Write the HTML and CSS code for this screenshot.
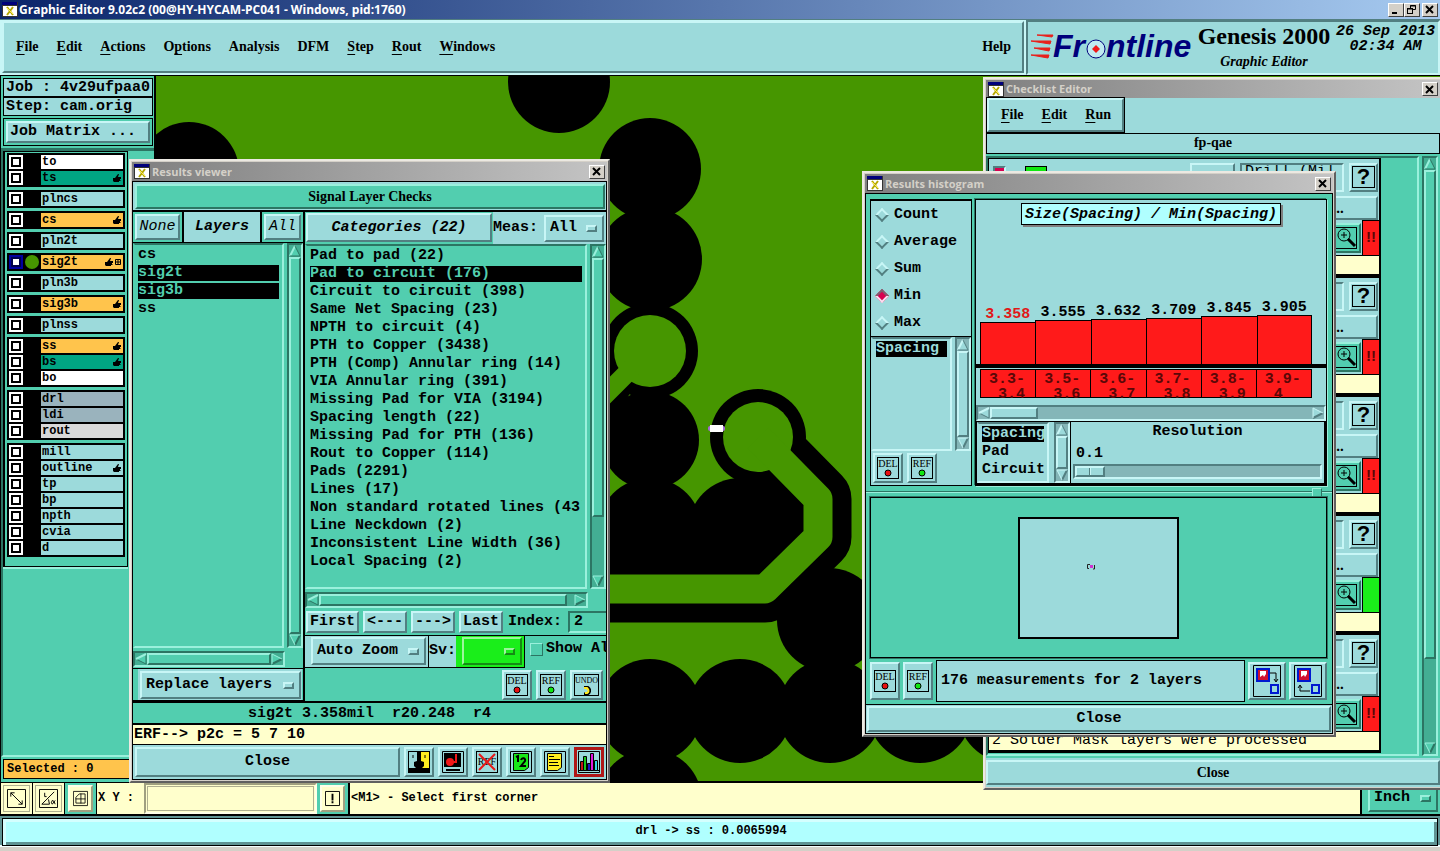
FILE: index.html
```html
<!DOCTYPE html>
<html lang="en">
<head>
  <meta charset="UTF-8">
  <title>Graphic Editor 9.02c2</title>
  <link rel="stylesheet" href="styles.css">
</head>
<body>
  <!-- shared icons -->
  <svg class="sprite" aria-hidden="true">
    <symbol id="app" viewBox="0 0 16 15">
      <rect width="16" height="15" fill="#333"/><rect width="15" height="3" fill="#00007b"/><rect x="1" y="4" width="14" height="10" fill="#fff"/>
      <path d="M5 5l6 8M11 5l-6 8" stroke="#b5a800" stroke-width="2"/><path d="M5 6l6 6" stroke="#ffee55"/>
    </symbol>
    <symbol id="close" viewBox="0 0 10 9"><path d="M1 1l7 7M8 1l-7 7" stroke="#000" stroke-width="2"/></symbol>
    <symbol id="hand" viewBox="0 0 8 8"><path d="M0 4h2l3-4h1L5 3h3v2H7v1h1L7 7H6v1H1L0 7z"/></symbol>
    <symbol id="up" viewBox="0 0 12 12"><path d="M6 1L1 11h10z" fill="var(--bg)"/><path d="M6 1L1 11" stroke="var(--light)" stroke-width="2"/><path d="M6 1l5 10H1" fill="none" stroke="var(--dark)" stroke-width="1"/></symbol>
    <symbol id="down" viewBox="0 0 12 12"><path d="M6 11L1 1h10z" fill="var(--bg)"/><path d="M11 1L6 11" stroke="var(--dark)" stroke-width="2"/><path d="M6 11L1 1h10" fill="none" stroke="var(--light)"/></symbol>
    <symbol id="left" viewBox="0 0 12 12"><path d="M1 6l10-5v10z" fill="var(--bg)"/><path d="M1 6l10 5V1" fill="none" stroke="var(--dark)"/><path d="M1 6l10-5" stroke="var(--light)" stroke-width="2"/></symbol>
    <symbol id="right" viewBox="0 0 12 12"><path d="M11 6L1 1v10z" fill="var(--bg)"/><path d="M11 6L1 11" stroke="var(--dark)" stroke-width="2"/><path d="M11 6L1 1v10" fill="none" stroke="var(--light)"/></symbol>
    <symbol id="red-dot" viewBox="0 0 8 8"><circle cx="4" cy="4" r="3" fill="#e81010" stroke="#000"/></symbol>
    <symbol id="green-dot" viewBox="0 0 8 8"><circle cx="4" cy="4" r="3" fill="#10e810" stroke="#000"/></symbol>
    <symbol id="zoom" viewBox="0 0 22 22">
      <rect x=".5" y=".5" width="21" height="21" fill="none" stroke="#000"/><circle cx="9" cy="8" r="6" fill="none" stroke="#000"/>
      <path d="M6 8h6M9 5v6" stroke="#000"/><path d="M13 12l7 7" stroke="#000" stroke-width="3"/>
    </symbol>
  </svg>

  <div class="app-title">
    <svg class="app-icon"><use href="#app"/></svg>
    <h1>Graphic Editor 9.02c2 (00@HY-HYCAM-PC041 - Windows, pid:1760)</h1>
    <button class="win-btn" aria-label="Minimize"><svg viewBox="0 0 10 9"><path d="M1 8h5" stroke="#000" stroke-width="2"/></svg></button>
    <button class="win-btn" aria-label="Restore"><svg viewBox="0 0 10 9"><path d="M3.500 3V.5h5v4H6M3 1h6M1 4h5" fill="none" stroke="#000"/><rect x=".5" y="3.500" width="5" height="5" fill="none" stroke="#000"/></svg></button>
    <button class="win-btn last" aria-label="Close"><svg><use href="#close"/></svg></button>
  </div>

  <header class="top">
    <nav class="main-menu">
      <button><u>F</u>ile</button>
      <button><u>E</u>dit</button>
      <button><u>A</u>ctions</button>
      <button>O<u>p</u>tions</button>
      <button>Analysis</button>
      <button>DFM</button>
      <button><u>S</u>tep</button>
      <button><u>R</u>out</button>
      <button><u>W</u>indows</button>
      <button class="help">Help</button>
    </nav>
    <div class="brand">
      <svg class="logo" viewBox="0 0 162 44" role="img" aria-label="Frontline">
        <path d="M6 10h16l-1 2zM0 16h20l-1 3zM3 23h16l-1 3zM0 30h18l-1 3z" fill="#e8201c" stroke="#e8201c"/>
        <g class="logo-text"><text x="22" y="32">Fr</text><text x="75" y="32">ntline</text></g>
        <circle cx="65" cy="24" r="9" fill="#bfeaf0" stroke="#00007b" stroke-width="1"/>
        <path d="M65 20l4 4-4 4-4-4z" fill="#f01818"/>
      </svg>
      <div class="product">
        <strong>Genesis 2000</strong>
        <em>Graphic Editor</em>
      </div>
      <div class="clock">26 Sep 2013<br>02:34 AM</div>
    </div>
  </header>

  <main class="work">
    <aside class="side teal">
      <div class="job">Job : 4v29ufpaa0</div>
      <div class="job">Step: cam.orig</div>
      <div class="matrix"><button class="cyan raised">Job Matrix ...</button></div>
      <div class="layer-area">
        <div class="layer-list">
          <div class="group">
            <label class="layer white"><input type="checkbox"><i></i><span>to</span></label>
            <label class="layer dark"><input type="checkbox"><i></i><span>ts<svg><use href="#hand"/></svg></span></label>
          </div>
          <div class="group"><label class="layer"><input type="checkbox"><i></i><span>plncs</span></label></div>
          <div class="group"><label class="layer orange"><input type="checkbox"><i></i><span>cs<svg><use href="#hand"/></svg></span></label></div>
          <div class="group"><label class="layer"><input type="checkbox"><i></i><span>pln2t</span></label></div>
          <div class="group"><label class="layer orange"><input type="checkbox" checked><i class="dot"></i><span>sig2t<svg><use href="#hand"/></svg><svg class="snap" viewBox="0 0 6 6"><path d="M.5.500h5v5h-5zM3 0v6M0 3h6" fill="none" stroke="#000"/></svg></span></label></div>
          <div class="group"><label class="layer"><input type="checkbox"><i></i><span>pln3b</span></label></div>
          <div class="group"><label class="layer orange"><input type="checkbox"><i></i><span>sig3b<svg><use href="#hand"/></svg></span></label></div>
          <div class="group"><label class="layer"><input type="checkbox"><i></i><span>plnss</span></label></div>
          <div class="group">
            <label class="layer orange"><input type="checkbox"><i></i><span>ss<svg><use href="#hand"/></svg></span></label>
            <label class="layer dark"><input type="checkbox"><i></i><span>bs<svg><use href="#hand"/></svg></span></label>
            <label class="layer white"><input type="checkbox"><i></i><span>bo</span></label>
          </div>
          <div class="group">
            <label class="layer slate"><input type="checkbox"><i></i><span>drl</span></label>
            <label class="layer slate"><input type="checkbox"><i></i><span>ldi</span></label>
            <label class="layer grey"><input type="checkbox"><i></i><span>rout</span></label>
          </div>
          <div class="group">
            <label class="layer"><input type="checkbox"><i></i><span>mill</span></label>
            <label class="layer"><input type="checkbox"><i></i><span>outline<svg><use href="#hand"/></svg></span></label>
            <label class="layer"><input type="checkbox"><i></i><span>tp</span></label>
            <label class="layer"><input type="checkbox"><i></i><span>bp</span></label>
            <label class="layer"><input type="checkbox"><i></i><span>npth</span></label>
            <label class="layer"><input type="checkbox"><i></i><span>cvia</span></label>
            <label class="layer"><input type="checkbox"><i></i><span>d</span></label>
          </div>
        </div>
      </div>
      <div class="selected">Selected : 0</div>
    </aside>

    <svg class="board" aria-label="Board view">
      <g transform="translate(-156 -76)">
        <circle cx="559" cy="82" r="51"/><circle cx="189" cy="172" r="50"/>
        <circle cx="650" cy="169" r="51"/><circle cx="650" cy="259" r="52"/>
        <circle cx="650" cy="440" r="49"/><circle cx="650" cy="351" r="48"/>
        <circle cx="650" cy="530" r="52"/><circle cx="740" cy="530" r="52"/>
        <path d="M600 510h205v65H600zM740 478l60 0v60h-60z"/>
        <path d="M608 350v80l24-40z"/>
        <circle cx="650" cy="351" r="36" class="copper"/>
        <path d="M632 368L600 400" class="track thin"/>
        <circle cx="758" cy="437" r="48"/>
        <path d="M758 438l60 61v38l-53 52H600" class="clearance"/>
        <circle cx="758" cy="437" r="35" class="copper"/>
        <path d="M758 438l60 61v38l-53 52H600" class="track"/>
        <circle cx="829" cy="620" r="52"/>
        <circle cx="650" cy="711" r="52"/><circle cx="740" cy="711" r="52"/><circle cx="830" cy="711" r="52"/>
        <circle cx="920" cy="711" r="52"/><circle cx="1010" cy="711" r="52"/><circle cx="650" cy="801" r="52"/>
        <path d="M600 690h400v40H600z"/>
        <rect x="708" y="426" width="17" height="5" rx="2" fill="#a66ad8"/><rect x="710" y="425" width="13" height="7" fill="#fff"/>
      </g>
    </svg>
  </main>

  <footer class="status">
    <button class="tool" aria-label="Measure"><svg viewBox="0 0 20 20"><path d="M.5.500h19v19H.5zM4 4l12 12M4 8V4h4M16 12v4h-4" fill="none" stroke="#000"/></svg></button>
    <button class="tool" aria-label="Angle"><svg viewBox="0 0 20 20"><path d="M.5.500h19v19H.5zM3 16L16 3M3 16h8M6 4v4h2M10 11l1 5M17 12l-3 4q-2-1 0-4 2 0 3 4" fill="none" stroke="#000"/></svg></button>
    <button class="tool on" aria-label="Grid"><svg viewBox="0 0 18 18"><path d="M.5.500h17v17H.5zM3.500 14.500v-7l4-4h7v11zM3 9.500h12M9.500 3v12" fill="none" stroke="#000"/></svg></button>
    <label for="xy">X Y :</label>
    <input id="xy" type="text">
    <button class="tool on" aria-label="Alert"><svg viewBox="0 0 16 16"><path d="M.5.500h15v15H.5z" fill="none" stroke="#000"/><path d="M8 3v7M8 11v2" stroke="#000" stroke-width="2"/></svg></button>
    <output class="prompt">&lt;M1&gt; - Select first corner</output>
    <div class="units teal"><span class="option raised"><select aria-label="Units"><option>Inch</option></select><i class="knob"></i></span></div>
  </footer>
  <div class="message"><p>drl -&gt; ss : 0.0065994</p></div>

  <section class="window checklist">
    <div class="win-title"><svg class="app-icon"><use href="#app"/></svg><h2>Checklist Editor</h2><button class="win-btn" aria-label="Close"><svg><use href="#close"/></svg></button></div>
    <div class="win-body cyan">
      <nav class="sub-menu raised"><button><u>F</u>ile</button><button><u>E</u>dit</button><button><u>R</u>un</button></nav>
      <h3 class="check-name">fp-qae</h3>
      <div class="check-area teal">
        <div class="check-view">
          <ul class="checks">
            <li class="cyan">
              <div class="check-row"><input type="checkbox" aria-label="Use check" checked><b class="state"></b><span class="label">Drill Checks</span><button class="raised run" aria-label="Run"></button><input type="text" value="Drill (Mil" aria-label="Comment"><button class="raised ask"><span>?</span></button></div>
              <div class="check-row"><button class="raised more">...</button></div>
              <div class="check-row tight"><button class="raised teal lens" aria-label="Zoom"><svg><use href="#zoom"/></svg></button><b class="flag">!!</b></div>
              <p></p>
            </li>
            <li class="cyan">
              <div class="check-row"><input type="text" aria-label="Comment"><button class="raised ask"><span>?</span></button></div>
              <div class="check-row"><button class="raised more">...</button></div>
              <div class="check-row tight"><button class="raised teal lens" aria-label="Zoom"><svg><use href="#zoom"/></svg></button><b class="flag">!!</b></div>
              <p></p>
            </li>
            <li class="cyan">
              <div class="check-row"><input type="text" aria-label="Comment"><button class="raised ask"><span>?</span></button></div>
              <div class="check-row"><button class="raised more">...</button></div>
              <div class="check-row tight"><button class="raised teal lens" aria-label="Zoom"><svg><use href="#zoom"/></svg></button><b class="flag">!!</b></div>
              <p></p>
            </li>
            <li class="cyan">
              <div class="check-row"><input type="text" aria-label="Comment"><button class="raised ask"><span>?</span></button></div>
              <div class="check-row"><button class="raised more">...</button></div>
              <div class="check-row tight"><button class="raised teal lens" aria-label="Zoom"><svg><use href="#zoom"/></svg></button><b class="flag ok"></b></div>
              <p></p>
            </li>
            <li class="cyan">
              <div class="check-row"><input type="text" aria-label="Comment"><button class="raised ask"><span>?</span></button></div>
              <div class="check-row"><button class="raised more">...</button></div>
              <div class="check-row tight"><button class="raised teal lens" aria-label="Zoom"><svg><use href="#zoom"/></svg></button><b class="flag">!!</b></div>
              <p>2 Solder Mask layers were processed</p>
            </li>
          </ul>
        </div>
        <div class="vscroll"><svg><use href="#up"/></svg><i style="flex: 0 0 82%"></i><svg><use href="#down"/></svg></div>
      </div>
      <button class="raised wide-close serif">Close</button>
    </div>
  </section>

  <section class="window histogram">
    <div class="win-title"><svg class="app-icon"><use href="#app"/></svg><h2>Results histogram</h2><button class="win-btn" aria-label="Close"><svg><use href="#close"/></svg></button></div>
    <div class="win-body teal">
      <div class="histo-top">
        <div class="measure cyan">
          <fieldset class="modes">
            <label><input type="radio" name="mode">Count</label>
            <label><input type="radio" name="mode">Average</label>
            <label><input type="radio" name="mode">Sum</label>
            <label><input type="radio" name="mode" checked>Min</label>
            <label><input type="radio" name="mode">Max</label>
          </fieldset>
          <div class="pick">
            <ul class="list"><li class="on">Spacing</li></ul>
            <div class="vscroll"><svg><use href="#up"/></svg><i></i><svg><use href="#down"/></svg></div>
          </div>
          <div class="icons">
            <button class="raised icon"><span class="tag">DEL<svg><use href="#red-dot"/></svg></span></button>
            <button class="raised icon"><span class="tag">REF<svg><use href="#green-dot"/></svg></span></button>
          </div>
        </div>
        <div class="chart cyan">
          <h3>Size(Spacing) / Min(Spacing)</h3>
          <div class="bars">
            <div class="bar hot"><span>3.358</span><i style="height: 42px"></i></div>
            <div class="bar"><span>3.555</span><i style="height: 44px"></i></div>
            <div class="bar"><span>3.632</span><i style="height: 45px"></i></div>
            <div class="bar"><span>3.709</span><i style="height: 46px"></i></div>
            <div class="bar"><span>3.845</span><i style="height: 48px"></i></div>
            <div class="bar"><span>3.905</span><i style="height: 49px"></i></div>
          </div>
          <div class="ranges">
            <span>3.3-<br>&nbsp;3.4</span><span>3.5-<br>&nbsp;3.6</span><span>3.6-<br>&nbsp;3.7</span><span>3.7-<br>&nbsp;3.8</span><span>3.8-<br>&nbsp;3.9</span><span>3.9-<br>&nbsp;4</span>
          </div>
          <div class="hscroll"><svg><use href="#left"/></svg><i style="flex: 0 0 14%"></i><svg><use href="#right"/></svg></div>
          <div class="chart-foot">
            <ul class="list"><li class="on">Spacing</li><li>Pad</li><li>Circuit</li></ul>
            <div class="vscroll"><svg><use href="#up"/></svg><i></i><svg><use href="#down"/></svg></div>
            <div class="resolution">
              <label for="res">Resolution</label>
              <output for="res">0.1</output>
              <input id="res" type="range" min="0" max="10" value="0" step="1">
            </div>
          </div>
        </div>
      </div>
      <div class="sash"><i></i></div>
      <div class="map"><div class="cyan"><svg viewBox="0 0 8 6"><path d="M3 .5H.5v4H2M6 5h1.500V1" fill="none" stroke="#222"/><rect x="3" y="1" width="3" height="3" fill="#d030d0"/></svg></div></div>
      <div class="summary">
        <button class="cyan raised icon"><span class="tag">DEL<svg><use href="#red-dot"/></svg></span></button>
        <button class="cyan raised icon"><span class="tag">REF<svg><use href="#green-dot"/></svg></span></button>
        <p class="cyan">176 measurements for 2 layers</p>
        <button class="cyan raised copy" aria-label="Copy to view"><svg viewBox="0 0 28 32"><path d="M.5.500h27v31H.5z" fill="none" stroke="#000"/><rect x="4" y="4" width="12" height="12" fill="#d01030" stroke="#0018d0" stroke-width="2"/><path d="M7 6v6l3-2 1 2 2-3V6z" fill="#fff"/><path d="M17 8h6v8M21 14l2 3 2-3" fill="none" stroke="#000"/><rect x="18" y="20" width="7" height="8" fill="none" stroke="#0018d0" stroke-width="2"/></svg></button>
        <button class="cyan raised copy" aria-label="Copy from view"><svg viewBox="0 0 28 32"><path d="M.5.500h27v31H.5z" fill="none" stroke="#000"/><rect x="4" y="4" width="12" height="12" fill="#d01030" stroke="#0018d0" stroke-width="2"/><path d="M7 6v6l3-2 1 2 2-3V6z" fill="#fff"/><path d="M16 26H6v-5M4 23l2-3 2 3" fill="none" stroke="#000"/><rect x="18" y="20" width="7" height="8" fill="none" stroke="#0018d0" stroke-width="2"/></svg></button>
      </div>
      <div class="close-bar cyan"><button class="raised wide-close">Close</button></div>
    </div>
  </section>

  <section class="window viewer">
    <div class="win-title"><svg class="app-icon"><use href="#app"/></svg><h2>Results viewer</h2><button class="win-btn" aria-label="Close"><svg><use href="#close"/></svg></button></div>
    <div class="win-body teal">
      <div class="check-title cyan"><button class="teal raised serif">Signal Layer Checks</button></div>
      <div class="columns">
        <div class="layers-col">
          <div class="layers-head">
            <span><button class="cyan raised">None</button></span>
            <h3 class="cyan">Layers</h3>
            <span><button class="cyan raised">All</button></span>
          </div>
          <div class="pick">
            <ul class="list"><li>cs</li><li class="on">sig2t</li><li class="on">sig3b</li><li>ss</li></ul>
            <div class="vscroll"><svg><use href="#up"/></svg><i></i><svg><use href="#down"/></svg></div>
          </div>
          <div class="hscroll"><svg><use href="#left"/></svg><i></i><svg><use href="#right"/></svg></div>
          <div class="replace"><div class="cyan"><span class="option raised"><select aria-label="Layer display"><option>Replace layers</option></select><i class="knob"></i></span></div></div>
        </div>
        <div class="cats-col">
          <div class="cats-head">
            <button class="cyan raised">Categories (22)</button>
            <div class="meas cyan"><label for="meas">Meas:</label><span class="option raised"><select id="meas"><option>All</option></select><i class="knob"></i></span></div>
          </div>
          <div class="pick">
            <ul class="list">
              <li>Pad to pad (22)</li>
              <li class="on">Pad to circuit (176)</li>
              <li>Circuit to circuit (398)</li>
              <li>Same Net Spacing (23)</li>
              <li>NPTH to circuit (4)</li>
              <li>PTH to Copper (3438)</li>
              <li>PTH (Comp) Annular ring (14)</li>
              <li>VIA Annular ring (391)</li>
              <li>Missing Pad for VIA (3194)</li>
              <li>Spacing length (22)</li>
              <li>Missing Pad for PTH (136)</li>
              <li>Rout to Copper (114)</li>
              <li>Pads (2291)</li>
              <li>Lines (17)</li>
              <li>Non standard rotated lines (43)</li>
              <li>Line Neckdown (2)</li>
              <li>Inconsistent Line Width (36)</li>
              <li>Local Spacing (2)</li>
            </ul>
            <div class="vscroll"><svg><use href="#up"/></svg><i style="flex: 0 0 76%"></i><svg><use href="#down"/></svg></div>
          </div>
          <div class="hscroll"><svg><use href="#left"/></svg><i style="flex: 0 0 89%"></i><svg><use href="#right"/></svg></div>
          <div class="index-row">
            <button class="cyan raised">First</button><button class="cyan raised">&lt;---</button><button class="cyan raised">---&gt;</button><button class="cyan raised">Last</button>
            <label for="index">Index:</label><input id="index" type="text" value="2">
          </div>
          <div class="zoom-row">
            <div class="auto cyan"><span class="option raised"><select aria-label="Zoom mode"><option>Auto Zoom</option></select><i class="knob"></i></span></div>
            <label class="sv cyan" for="sv">Sv:</label>
            <div class="sev green"><span class="option raised"><select id="sv"><option></option></select><i class="knob"></i></span></div>
            <label class="show"><input type="checkbox">Show All</label>
          </div>
          <div class="icons end">
            <button class="cyan raised icon"><span class="tag">DEL<svg><use href="#red-dot"/></svg></span></button>
            <button class="cyan raised icon"><span class="tag">REF<svg><use href="#green-dot"/></svg></span></button>
            <button class="cyan raised icon undo"><span class="tag">UNDO<svg viewBox="0 0 8 10"><path d="M1 1h3c4 2 3 6 0 7H1" fill="none" stroke="#000" stroke-width="3"/><path d="M1 2h3c2 2 2 4 0 5H2" fill="none" stroke="#ffe820" stroke-width="2"/></svg></span></button>
          </div>
        </div>
      </div>
      <p class="result">sig2t 3.358mil&nbsp; r20.248&nbsp; r4</p>
      <p class="erf">ERF--&gt; p2c = 5 7 10</p>
      <div class="viewer-foot cyan">
        <button class="raised wide-close">Close</button>
        <button class="raised icon" aria-label="Compare"><svg viewBox="0 0 22 22"><path d="M0 0h22v22H0z" fill="#000"/><path d="M1 1h8v9l-3 1v4l2 2H1z" fill="#9cdadb"/><path d="M13 1h8v16h-7l2-2v-4l-3-1z" fill="#ffee20"/><path d="M5 4v3M17 4v3" stroke="#000"/></svg></button>
        <button class="raised icon" aria-label="Snapshot"><svg viewBox="0 0 22 22"><path d="M.5.500h21v21H.5z" fill="none" stroke="#000"/><path d="M2 2h17v14H2z"/><circle cx="8" cy="11" r="4" fill="#f01818"/><path d="M8 11h6V3" fill="none" stroke="#f01818" stroke-width="2"/><path d="M4 19h14" stroke="#000" stroke-width="2"/></svg></button>
        <button class="raised icon" aria-label="Clear reference"><span class="tag">REF</span><svg class="cross" viewBox="0 0 22 22"><path d="M3 3l16 16M19 3L3 19" stroke="#e81818" stroke-width="2"/></svg></button>
        <button class="raised icon" aria-label="Numbers"><svg viewBox="0 0 22 22"><path d="M.5.500h21v21H.5z" fill="none" stroke="#000"/><path d="M3.500 2.500h15v14l-4 3h-11z" fill="#18e818" stroke="#000"/><path d="M6 6l2-1v6M11 9c1-3 5-2 4 1l-4 5h5" fill="none" stroke="#000" stroke-width="2"/></svg></button>
        <button class="raised icon" aria-label="Notes"><svg viewBox="0 0 22 22"><path d="M.5.500h21v21H.5z" fill="none" stroke="#000"/><path d="M3.500 2.500h14v14l-4 3h-10z" fill="#ffee20" stroke="#000"/><path d="M5 5.500h5M5 8.500h11M5 11.500h9M5 14.500h10" stroke="#000"/></svg></button>
        <button class="raised icon picked" aria-label="Histogram"><svg viewBox="0 0 22 22"><path d="M.5.500h21v21H.5z" fill="none" stroke="#000"/><path d="M1 19.500h20" stroke="#000"/><path d="M2.500 10.500h3v9h-3z" fill="#c01818" stroke="#000"/><path d="M5.500 5.500h3v14h-3z" fill="#18c818" stroke="#000"/><path d="M9.500 12.500h3v7h-3z" fill="#1818c0" stroke="#000"/><path d="M12.500 2.500h3v17h-3z" fill="#e018e0" stroke="#000"/><path d="M16.500 9.500h3v10h-3z" fill="#30d8e8" stroke="#000"/></svg></button>
      </div>
    </div>
  </section>
</body>
</html>
```
FILE: styles.css
```css
* {
  box-sizing: border-box;
}
:root {
  --mono: "Liberation Mono", "Courier New", monospace;
  --serif: "Liberation Serif", "Times New Roman", serif;
  --ui: "Open Sans", Tahoma, sans-serif;
}
body {
  margin: 0;
  min-height: 100vh;
  display: flex;
  flex-direction: column;
  position: relative;
  overflow: hidden;
  background: #d4d0c8;
  font: bold 15px/18px var(--mono);
  color: #000;
}
h1, h2, h3, p, ul {
  margin: 0;
  padding: 0;
  font: inherit;
  list-style: none;
}
button, input, select {
  font: inherit;
  color: inherit;
  margin: 0;
  padding: 0;
  border: 0;
  border-radius: 0;
  background: none;
  appearance: none;
}
svg {
  display: block;
  flex: none;
}
.sprite {
  position: absolute;
  width: 0;
  height: 0;
}

/* colour themes and bevels */
.cyan {
  --bg: #9cdadb;
  --light: #c8f6f6;
  --dark: #527f81;
  --trough: #84b6b8;
  background: var(--bg);
}
.teal {
  --bg: #52ceaf;
  --light: #9af0dc;
  --dark: #2c7563;
  --trough: #43ae93;
  background: var(--bg);
}
.green {
  --bg: #1aee1a;
  --light: #9cf69c;
  --dark: #158a15;
  background: var(--bg);
}
.raised {
  border: 2px solid;
  border-color: var(--light) var(--dark) var(--dark) var(--light);
  background: var(--bg);
}
.serif {
  font: bold 14px/18px var(--serif);
}

/* application title and menu */
.app-title, .win-title {
  display: flex;
  align-items: center;
  gap: 2px;
  height: 19px;
  padding: 0 2px;
  font: bold 11px/16px var(--ui);
  color: #fff;
  background: linear-gradient(90deg, #0a246a, #a6caf0);
}
.app-title {
  font-size: 12px;
  gap: 1px;
}
.app-title h1, .win-title h2 {
  flex: 1;
}
.app-icon {
  width: 16px;
  height: 15px;
}
.win-btn {
  width: 16px;
  height: 14px;
  padding: 1px 2px;
  border: 1px solid;
  border-color: #fff #404040 #404040 #fff;
  background: #d4d0c8;
}
.app-title .win-btn {
  margin-right: -1px;
}
.app-title .win-btn.last {
  margin: 0 0 0 2px;
}
.win-btn svg {
  width: 10px;
  height: 9px;
}
.top {
  display: flex;
  height: 57px;
  background: #c8f6f6;
  border-top: 1px solid #527f81;
  border-bottom: 1px solid #000;
}
.main-menu {
  flex: 1;
  display: flex;
  align-items: center;
  gap: 18px;
  margin: 1px 2px 2px;
  padding: 0 11px 0 12px;
  background: #9cdadb;
  border: 2px solid;
  border-color: #c8f6f6 #527f81 #527f81 #c8f6f6;
  font: bold 14px/18px var(--serif);
}
.help {
  margin-left: auto;
}
u {
  text-underline-offset: 3px;
}
.brand {
  flex: 0 0 414px;
  display: flex;
  padding: 0 2px;
  background: #9cdadb;
  border: 2px solid;
  border-color: #527f81 #c8f6f6 #c8f6f6 #527f81;
}
.logo {
  width: 162px;
  height: 44px;
  margin: 3px 2px 0 1px;
}
.logo-text {
  font: italic bold 32px "Liberation Sans", Arial, sans-serif;
  fill: #00007b;
}
.product {
  display: flex;
  flex-direction: column;
  align-items: center;
  flex: 1;
  font-family: var(--serif);
  white-space: nowrap;
}
.product strong {
  font-size: 24px;
  line-height: 29px;
}
.product em {
  font-size: 14px;
  line-height: 22px;
}
.clock {
  font-style: italic;
  line-height: 15px;
  text-align: center;
  padding: 2px 1px 0 3px;
}

/* work area */
.work {
  flex: 1;
  display: flex;
}
.side {
  flex: 0 0 156px;
  display: flex;
  flex-direction: column;
  border-left: 1px solid #000;
  border-right: 2px solid #000;
  padding: 2px 1px 3px 2px;
}
.job {
  height: 19px;
  padding-left: 2px;
  overflow: hidden;
  white-space: nowrap;
  line-height: 17px;
  border: 1px solid #000;
  background: #9cdadb;
}
.matrix {
  margin-top: 2px;
  padding: 2px;
  border: 1px solid #000;
}
.matrix button {
  width: 100%;
  height: 22px;
  padding-left: 2px;
  text-align: left;
}
.layer-area {
  flex: 1;
  margin: 2px -1px 2px -2px;
  border-top: 3px solid #2c7563;
  border-left: 2px solid #2c7563;
  border-bottom: 2px solid #9af0dc;
}
.layer-list {
  width: 125px;
  padding: 1px 2px 6px;
  border: 1px solid #000;
  border-left-width: 2px;
  box-shadow: 0 2px #9af0dc;
  font-size: 12px;
  line-height: 14px;
}
.group {
  padding: 1px 2px;
  margin-bottom: 3px;
  background: #000;
}
.layer {
  display: flex;
  padding: 1px 0;
  height: 16px;
}
.layer input {
  width: 14px;
  height: 14px;
  background: #fff;
  border: 2px solid #fff;
  box-shadow: inset 0 0 0 2px #000;
}
.layer input:checked {
  border-color: #0000a0;
  box-shadow: inset 0 0 0 2px #00004c;
}
.layer i {
  width: 14px;
  height: 14px;
  margin: 0 2px;
}
.layer .dot {
  border-radius: 50%;
  background: #469600;
}
.layer span {
  flex: 1;
  display: flex;
  align-items: center;
  gap: 2px;
  padding: 0 2px 0 1px;
  background: #9cdadb;
}
.layer span svg:first-of-type {
  margin-left: auto;
}
.layer svg {
  width: 8px;
  height: 8px;
}
.layer .snap {
  width: 6px;
  height: 6px;
}
.layer.white span { background: #fff; }
.layer.dark span { background: #00a583; }
.layer.orange span { background: #ffc44c; }
.layer.slate span { background: #9ab3bd; }
.layer.grey span { background: #d9d9d9; }
.selected {
  height: 20px;
  padding-left: 3px;
  font-size: 12px;
  background: #ffc44c;
  border: 1px solid #000;
}
.board {
  flex: 1;
  height: auto;
  min-width: 0;
  background: #469600;
  border-bottom: 1px solid #000;
}
.copper {
  fill: #469600;
}
.clearance, .track {
  fill: none;
  stroke: #000;
  stroke-width: 67px;
  stroke-linejoin: round;
}
.track {
  stroke: #469600;
  stroke-width: 29px;
}
.track.thin {
  stroke-width: 19px;
}

/* status line */
.status {
  display: flex;
  height: 34px;
  background: #ffffcc;
  border: 1px solid #000;
  border-width: 1px 0 2px 1px;
  font-size: 12px;
  line-height: 30px;
}
.tool {
  width: 32px;
  padding: 2px;
  border-right: 1px solid #000;
}
.tool svg {
  width: 27px;
  height: 27px;
  padding: 3px;
  border: 1px solid #b0b090;
}
.tool.on {
  padding: 2px 3px;
  background: #52ceaf;
}
.tool.on svg {
  width: 25px;
  background: #ffffcc;
  border-width: 2px;
  border-color: #ffffe8 #a0a080 #a0a080 #ffffe8;
}
.status label {
  width: 47px;
  padding-left: 1px;
}
.status input {
  width: 173px;
  background: #ffffcc;
  border: 2px solid;
  border-color: #a0a080 #ffffe8 #ffffe8 #a0a080;
  outline: 1px solid #b0b090;
  outline-offset: -4px;
}
.prompt {
  flex: 1;
  padding-left: 1px;
  border-left: 1px solid #000;
}
.units {
  width: 80px;
  padding: 1px 2px 1px 6px;
  border-left: 2px solid #000;
}
.message {
  height: 35px;
  padding: 2px 2px 5px;
  background: linear-gradient(#5f9393 29px, #f4ffff 29px, #f4ffff 31px, #d4d0c8 31px);
  font-size: 12px;
}
.message p {
  height: 28px;
  padding-right: 18px;
  text-align: center;
  line-height: 24px;
  background: #b0ffff;
  border: 1px solid #000;
  box-shadow: inset 3px 3px #d4ffff, inset -3px -3px #5f9393;
}
.option {
  display: flex;
  align-items: center;
  padding: 0 5px 0 4px;
  height: 28px;
}
.option select {
  flex: 1;
  min-width: 0;
}
.knob {
  width: 11px;
  height: 7px;
  border: 2px solid;
  border-color: var(--light) var(--dark) var(--dark) var(--light);
}
.units .option {
  font-size: 15px;
}

/* floating windows */
.window {
  position: absolute;
  display: flex;
  flex-direction: column;
  padding: 1px;
  border: 2px solid;
  border-color: #ece9e2 #606060 #606060 #ece9e2;
  background: #d4d0c8;
}
.win-title {
  flex: none;
  color: #d4d0c8;
  background: linear-gradient(90deg, #808080, #c4c4c4);
  padding-right: 2px;
}
.win-body {
  flex: 1;
  min-height: 0;
  display: flex;
  flex-direction: column;
  border: 1px solid #000;
}
.list {
  flex: 1;
  min-width: 0;
  padding: 2px 3px 0 3px;
  overflow: hidden;
  white-space: nowrap;
  border: 2px solid;
  border-color: var(--dark) var(--light) var(--light) var(--bg);
}
.list li {
  height: 16px;
  line-height: 16px;
  margin-bottom: 2px;
  overflow: hidden;
}
.list .on {
  color: var(--bg);
  background: #000;
}
.pick {
  flex: 1;
  display: flex;
  gap: 3px;
  min-height: 0;
}
.vscroll, .hscroll {
  flex: 0 0 15px;
  display: flex;
  align-items: center;
  border: 2px solid;
  border-color: var(--dark) var(--light) var(--light) var(--dark);
  background: var(--trough);
}
.vscroll {
  flex-direction: column;
}
.vscroll svg, .hscroll svg {
  width: 12px;
  height: 12px;
}
.vscroll svg:last-child {
  margin-top: auto;
}
.hscroll svg:last-child {
  margin-left: auto;
}
.vscroll i, .hscroll i {
  flex: 1;
  align-self: stretch;
  background: var(--bg);
  border: 2px solid;
  border-color: var(--light) var(--dark) var(--dark) var(--light);
}
.icons {
  display: flex;
  gap: 4px;
  padding: 2px;
}
.icon {
  width: 30px;
  height: 30px;
  display: grid;
  place-items: center;
}
.icon > * {
  grid-area: 1 / 1;
  width: 22px;
  height: 22px;
}
.tag {
  display: flex;
  flex-direction: column;
  align-items: center;
  overflow: hidden;
  border: 1px solid #000;
  font: 10px/11px var(--serif);
}
.tag svg {
  width: 8px;
  height: 8px;
}
.wide-close {
  width: 100%;
}

/* results viewer */
.viewer {
  left: 129px;
  top: 159px;
  width: 481px;
  height: 624px;
}
.check-title {
  padding: 2px 1px 1px 2px;
  border-bottom: 2px solid #000;
}
.check-title button {
  width: 100%;
  height: 25px;
}
.columns {
  flex: 1;
  display: flex;
  min-height: 0;
}
.layers-col {
  flex: 0 0 172px;
  display: flex;
  flex-direction: column;
  border-right: 2px solid #000;
}
.layers-head {
  display: flex;
  height: 31px;
  font-style: italic;
  border-bottom: 1px solid #000;
}
.layers-head span {
  padding: 2px;
  font-weight: normal;
}
.layers-head button {
  height: 26px;
  width: 100%;
}
.layers-head span:first-child {
  flex: 0 0 49px;
}
.layers-head span:last-child {
  flex: 0 0 41px;
}
.layers-head h3 {
  flex: 1;
  text-align: center;
  line-height: 30px;
  border: 2px solid #000;
  border-width: 0 2px;
}
.layers-col .hscroll, .cats-col .hscroll {
  margin: 3px 18px 1px 0;
}
.replace {
  padding: 0 1px 0 5px;
  border: 1px solid #000;
  border-width: 1px 0 1px;
}
.replace > div {
  padding: 2px 1px 1px 2px;
}
.cats-col {
  flex: 1;
  min-width: 0;
  display: flex;
  flex-direction: column;
}
.cats-head {
  display: flex;
  height: 32px;
}
.cats-head button {
  flex: 0 0 186px;
  margin: 1px 1px 2px;
  font-style: italic;
}
.meas {
  flex: 1;
  display: flex;
  justify-content: space-between;
  align-items: center;
  padding-right: 2px;
}
.meas .option {
  width: 60px;
  height: 27px;
}
.index-row {
  display: flex;
  gap: 4px;
  height: 27px;
  padding: 2px 0 2px 1px;
  overflow: hidden;
  white-space: nowrap;
  border-bottom: 1px solid #000;
}
.index-row button {
  flex: 0 0 auto;
  padding: 0 2px;
}
.index-row label {
  line-height: 22px;
  padding: 0 2px 0 1px;
}
.index-row input {
  flex: 1;
  min-width: 0;
  padding-left: 4px;
  border: 2px solid;
  border-color: var(--dark) var(--light) var(--light) var(--dark);
  border-right: 0;
}
.zoom-row {
  display: flex;
  height: 32px;
  overflow: hidden;
  white-space: nowrap;
}
.auto, .sev {
  flex: none;
  padding: 1px 2px 2px;
  border-bottom: 1px solid #000;
  border-right: 1px solid #000;
}
.auto {
  width: 124px;
  padding-left: 6px;
}
.sv {
  flex: none;
  line-height: 30px;
  border-bottom: 1px solid #000;
}
.sev {
  width: 69px;
  padding-left: 6px;
}
.show {
  flex: none;
  display: flex;
  gap: 3px;
  padding-left: 5px;
  line-height: 26px;
}
.show input {
  width: 13px;
  height: 13px;
  margin-top: 7px;
  border: 1px solid;
  border-color: var(--light) var(--dark) var(--dark) var(--light);
}
.end {
  justify-content: flex-end;
  padding: 2px 3px 1px;
}
.undo {
  width: 33px;
}
.undo .tag {
  width: 25px;
  font-size: 8px;
}
.tag svg:not(:has(use)) {
  height: 10px;
}
.result {
  height: 22px;
  line-height: 22px;
  text-align: center;
  border-top: 2px solid #000;
}
.erf {
  height: 22px;
  line-height: 20px;
  padding-left: 1px;
  background: #ffffcc;
  border-top: 2px solid #000;
  border-bottom: 1px solid #000;
}
.viewer-foot {
  display: flex;
  gap: 4px;
  padding: 2px;
}
.viewer-foot .wide-close {
  flex: 1;
}
.viewer-foot .tag {
  line-height: 20px;
}
.picked {
  border-color: #b01818;
  outline: 1px solid #b01818;
  outline-offset: -3px;
}

/* results histogram */
.histogram {
  left: 862px;
  top: 171px;
  width: 474px;
  height: 566px;
}
.histo-top {
  display: flex;
  gap: 3px;
  padding: 5px 5px 2px 4px;
}
.measure {
  flex: 0 0 102px;
  display: flex;
  flex-direction: column;
  border: 1px solid #000;
  border-top-width: 2px;
}
.modes {
  margin: 0;
  padding: 0 0 0 5px;
  border: 0;
  border-bottom: 1px solid #000;
}
.modes label {
  display: flex;
  align-items: center;
  gap: 7px;
  height: 27px;
  line-height: 26px;
}
.modes input {
  width: 10px;
  height: 10px;
  margin: 0 0 0 1px;
  transform: rotate(45deg);
  border: 2px solid;
  border-color: #c8f6f6 #527f81 #527f81 #c8f6f6;
}
.modes input:checked {
  background: #d80050;
  border-color: #7f6070 #f8e0f0 #f8e0f0 #7f6070;
}
.chart {
  flex: 1;
  min-width: 0;
  display: flex;
  flex-direction: column;
  border: 1px solid #000;
  box-shadow: -1px -1px #2c7563, 1px 1px #9af0dc;
}
.chart h3 {
  align-self: center;
  margin: 3px 0 0;
  padding: 2px 3px 0;
  height: 22px;
  font-style: italic;
  background: #b0ffff;
  border: 1px solid #000;
  box-shadow: 2px 2px #808080;
}
.bars, .ranges {
  display: flex;
  padding: 0 14px 0 4px;
}
.bars {
  height: 143px;
  align-items: flex-end;
  border-bottom: 4px solid #000;
}
.bar {
  flex: 1;
  text-align: center;
}
.bar i {
  display: block;
  margin-right: -1px;
  background: #ff1a1a;
  border: 1px solid #000;
  border-bottom: 0;
}
.bar span {
  display: block;
  line-height: 14px;
}
.hot span {
  color: #e01818;
}
.ranges {
  margin: 1px 0 7px;
}
.ranges span {
  flex: 1;
  height: 29px;
  margin-right: -1px;
  padding: 2px 0 0 8px;
  line-height: 15px;
  color: #5a0808;
  background: #ff1a1a;
  border: 1px solid #000;
}
.ranges span:last-child, .bar:last-child i {
  margin-right: 0;
}
.chart-foot {
  display: flex;
  height: 64px;
  border: 1px solid #000;
  border-width: 1px 1px 2px;
}
.chart-foot .list {
  flex: 0 0 72px;
}
.chart-foot .vscroll {
  margin-left: 5px;
}
.resolution {
  flex: 1;
  display: flex;
  flex-direction: column;
  padding: 1px 2px;
  border-left: 1px solid #000;
  border-right: 1px solid #000;
}
.resolution label {
  text-align: center;
}
.resolution output {
  padding: 4px 3px 0;
}
.resolution input {
  width: 100%;
  height: 15px;
  margin: 1px 0 0;
  background: var(--trough);
  border: 2px solid;
  border-color: var(--dark) var(--light) var(--light) var(--dark);
}
.resolution input::-webkit-slider-thumb {
  appearance: none;
  width: 30px;
  height: 11px;
  border: 2px solid;
  border-color: var(--light) var(--dark) var(--dark) var(--light);
  background: linear-gradient(90deg, #9cdadb 12px, #527f81 12px 13px, #c8f6f6 13px 14px, #9cdadb 14px);
}
.sash {
  height: 9px;
  display: flex;
  justify-content: flex-end;
  padding-right: 10px;
  background: linear-gradient(#52ceaf 3px, #2c7563 3px 4px, #9af0dc 4px 5px, #52ceaf 5px);
}
.sash i {
  width: 10px;
  height: 9px;
  border: 1px solid;
  border-color: #9af0dc #2c7563 #2c7563 #9af0dc;
  background: #52ceaf;
}
.map {
  flex: 1;
  min-height: 0;
  margin: 0 5px 0 4px;
  display: grid;
  place-items: center;
  border: 1px solid #000;
  outline: 1px solid #2c7563;
}
.map div {
  width: 161px;
  height: 122px;
  padding: 45px 0 0 67px;
  border: 2px solid #000;
}
.map svg {
  width: 8px;
  height: 6px;
}
.summary {
  display: flex;
  gap: 3px;
  padding: 2px 5px 2px 4px;
}
.summary .icon {
  height: 38px;
  align-self: center;
}
.summary p {
  flex: 1;
  padding-left: 4px;
  line-height: 40px;
  border: 1px solid #000;
}
.copy {
  width: 38px;
  height: 38px;
  align-self: center;
}
.copy svg {
  width: 34px;
  height: 34px;
  padding: 1px;
}
.close-bar {
  padding: 1px;
  border-top: 1px solid #000;
}
.close-bar button {
  height: 26px;
}

/* checklist editor */
.checklist {
  right: 0;
  top: 77px;
  width: 457px;
  height: 713px;
  padding-right: 0;
  border-right: 0;
}
.checklist .win-title {
  height: 18px;
}
.checklist .win-body {
  border-width: 0;
}
.sub-menu {
  align-self: flex-start;
  display: flex;
  gap: 18px;
  height: 34px;
  padding: 0 11px 0 12px;
  outline: 1px solid #000;
  margin: 0 1px 1px;
  font: bold 14px/18px var(--serif);
}
.check-name {
  height: 21px;
  text-align: center;
  font: bold 14px/18px var(--serif);
  border: 1px solid #000;
}
.check-area {
  flex: 1;
  min-height: 0;
  display: flex;
  gap: 3px;
  padding: 2px 2px 2px 0;
}
.check-view {
  flex: 1;
  overflow: hidden;
  border: 2px solid;
  border-color: var(--dark) var(--light) var(--light) var(--dark);
}
.checks {
  width: 393px;
  border-left: 1px solid #000;
}
.checks li {
  height: 119px;
  border: 1px solid #000;
  border-width: 1px 2px 3px 0;
}
.check-row {
  display: flex;
  justify-content: flex-end;
  align-items: center;
  gap: 5px;
  height: 34px;
  padding-right: 1px;
}
.check-row.tight {
  gap: 2px;
  padding: 0;
}
.check-row:first-child {
  height: 36px;
}
.check-row:nth-child(2) {
  height: 26px;
}
.check-row input[type="checkbox"] {
  align-self: flex-start;
  width: 13px;
  height: 13px;
  margin: 7px 0 0 4px;
  background: #d80050;
  border: 2px solid;
  border-color: var(--dark) var(--light) var(--light) var(--dark);
}
.state {
  width: 22px;
  height: 22px;
  margin-left: 14px;
  background: #10e810;
  border: 1px solid #000;
}
.label {
  flex: 1;
  font: bold 14px/18px var(--serif);
}
.run {
  width: 45px;
  height: 29px;
}
.check-row input[type="text"] {
  width: 104px;
  height: 29px;
  padding: 0 0 12px 3px;
  line-height: 14px;
  font-weight: normal;
  border: 2px solid;
  border-color: var(--dark) var(--light) var(--light) var(--dark);
}
.ask {
  width: 29px;
  height: 29px;
  padding: 1px;
}
.ask span {
  display: block;
  border: 1px solid #000;
  font: bold 22px/20px "Liberation Sans", Arial, sans-serif;
}
.more {
  width: 80px;
  height: 24px;
  font-family: var(--serif);
}
.lens {
  width: 30px;
  height: 30px;
  padding: 2px;
}
.lens svg {
  width: 22px;
  height: 22px;
}
.flag {
  width: 16px;
  height: 34px;
  text-align: center;
  line-height: 32px;
  font-family: "Liberation Sans", Arial, sans-serif;
  color: #5a0808;
  background: #ff1a1a;
  outline: 1px solid #000;
}
.flag.ok {
  background: #1aee1a;
}
.checks p {
  height: 19px;
  padding-left: 3px;
  font-weight: normal;
  background: #ffffcc;
  border-top: 1px solid #000;
}
.checklist .wide-close {
  height: 25px;
  margin: 2px 0;
}
```
